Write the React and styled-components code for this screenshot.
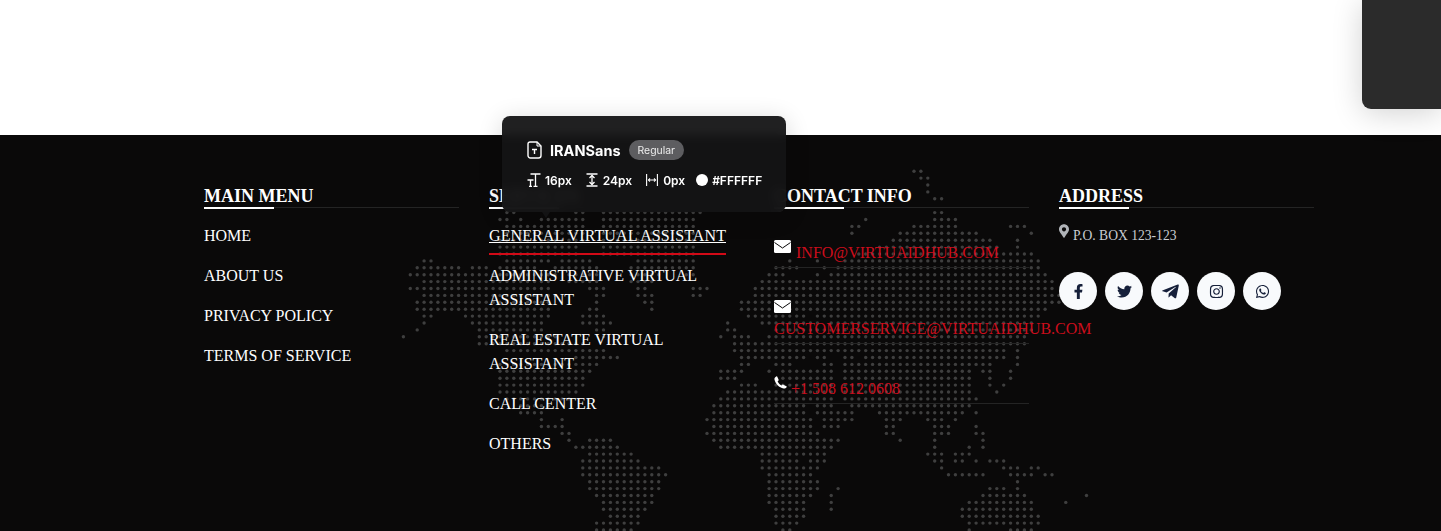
import React from 'react'
import styled, { createGlobalStyle } from 'styled-components'
import {
  FaMapMarkerAlt,
  FaFacebookF,
  FaTwitter,
  FaTelegramPlane,
  FaInstagram,
  FaWhatsapp,
} from 'react-icons/fa'

const GlobalStyle = createGlobalStyle`
  html, body {
    margin: 0;
    padding: 0;
    background: #fff;
    overflow: hidden;
  }
  * {
    box-sizing: border-box;
  }
`

const Page = styled.div`
  position: relative;
  width: 100%;
  height: 531px;
  overflow: hidden;
  font-family: 'Liberation Serif', 'Times New Roman', serif;
`

const TopArea = styled.div`
  height: 135px;
  background: #fff;
`

const Footer = styled.footer`
  position: relative;
  height: 396px;
  background: #0a0909;
  padding: 51px 0 0 204px;
`

const MapLayer = styled.svg`
  position: absolute;
  left: 0;
  top: 0;
  fill: #3f3f3f;
`

const Columns = styled.div`
  position: relative;
  display: grid;
  grid-template-columns: repeat(4, 255px);
  column-gap: 30px;
`

const Heading = styled.h3`
  position: relative;
  margin: 0 0 16px;
  height: 22px;
  font-size: 18px;
  line-height: 20px;
  font-weight: 700;
  color: #fff;
  text-transform: uppercase;
  border-bottom: 1px solid #242424;

  &::after {
    content: '';
    position: absolute;
    left: 0;
    bottom: -2px;
    width: 70px;
    height: 2px;
    background: #fff;
  }
`

const MenuList = styled.ul`
  list-style: none;
  margin: 0;
  padding: 0;
`

const MenuItem = styled.li`
  position: relative;
  margin-bottom: 16px;
  width: ${(p) => (p.$active ? 'fit-content' : 'auto')};
  font-size: 16px;
  line-height: 24px;
  letter-spacing: ${(p) => (p.$active ? '0.1px' : '0')};
  color: #fff;
  text-transform: uppercase;
  text-decoration: ${(p) => (p.$active ? 'underline' : 'none')};

  ${(p) =>
    p.$active &&
    `
    &::after {
      content: '';
      position: absolute;
      left: 0;
      right: 0;
      bottom: -7px;
      height: 2px;
      background: #d20a17;
    }
  `}
`

const ContactList = styled.ul`
  list-style: none;
  margin: 33px 0 0;
  padding: 0;
`

const ContactItem = styled.li`
  display: flex;
  flex-wrap: wrap;
  align-items: flex-start;
  column-gap: ${(p) => p.$gap || 5}px;
  padding-bottom: 2px;
  margin-bottom: 33px;
  border-bottom: 1px solid #242424;
`

const ContactIcon = styled.svg`
  display: block;
  margin: -1px 0 4px;
  fill: #fff;
`

const ContactLink = styled.a`
  font-size: 16px;
  line-height: 24px;
  color: #cc0d1c;
  text-transform: uppercase;
  white-space: nowrap;
`

const AddressLine = styled.p`
  display: flex;
  align-items: flex-start;
  gap: 4px;
  margin: 0 0 24px;
  height: 24px;
  font-size: 13.6px;
  line-height: 24px;
  color: #c9ccd1;
  text-transform: uppercase;

  svg {
    width: 10px;
    height: 14px;
    color: #b0b3b8;
  }
`

const SocialRow = styled.div`
  display: flex;
  gap: 8px;
`

const SocialButton = styled.a`
  display: flex;
  align-items: center;
  justify-content: center;
  width: 38px;
  height: 38px;
  border-radius: 50%;
  background: #f8fafc;
  color: #16203a;
  font-size: ${(p) => p.$size || 15}px;
`

const CornerPanel = styled.div`
  position: absolute;
  top: 0;
  right: 0;
  width: 79px;
  height: 109px;
  background: #2b2b2b;
  border-bottom-left-radius: 9px;
  box-shadow: 0 4px 30px rgba(0, 0, 0, 0.18);
`

const Inspector = styled.div`
  position: absolute;
  left: 502px;
  top: 116px;
  width: 284px;
  height: 96px;
  padding: 24px 24px 0 25px;
  border-radius: 8px;
  background: rgba(20, 20, 21, 0.95);
  backdrop-filter: blur(5px);
  box-shadow: 0 4px 24px rgba(0, 0, 0, 0.16);
  font-family: Inter, 'Noto Sans', sans-serif;
  color: #fff;

  &::after {
    content: '';
    position: absolute;
    left: 40px;
    bottom: -6px;
    width: 0;
    height: 0;
    border-left: 4px solid transparent;
    border-right: 4px solid transparent;
    border-top: 6px solid rgba(20, 20, 21, 0.95);
  }
`

const InspectorTitle = styled.div`
  display: flex;
  align-items: center;
  height: 20px;
`

const FontName = styled.span`
  margin: 0 8px 0 8px;
  font-size: 14.5px;
  font-weight: 700;
`

const WeightBadge = styled.span`
  display: flex;
  align-items: center;
  height: 20px;
  padding: 0 9px;
  border-radius: 10px;
  background: #5d5d60;
  color: #eeeeee;
  font-size: 10.4px;
`

const InspectorStats = styled.div`
  display: flex;
  align-items: center;
  height: 18px;
  margin-top: 11px;
`

const Stat = styled.span`
  display: flex;
  align-items: center;
  gap: ${(p) => p.$gap || 4}px;
  margin-right: ${(p) => p.$after || 0}px;
  font-size: 12px;
  font-weight: 600;
`

const Swatch = styled.i`
  display: block;
  width: 12px;
  height: 12px;
  border-radius: 50%;
  background: #fff;
`

// one entry per row, each row holds [first col, last col] runs of dots 6.9px apart
const mapRows = [
  [[74, 75]],
  [[75, 76]],
  [[76, 76]],
  [[76, 76]],
  [[77, 78]],
  [],
  [[15, 16], [25, 26], [29, 43], [77, 78]],
  [[14, 15], [17, 17], [20, 26], [29, 42], [67, 67], [77, 80]],
  [[15, 26], [29, 42], [65, 66], [74, 80], [88, 90]],
  [[15, 26], [29, 42], [65, 65], [72, 83], [91, 91]],
  [[14, 26], [29, 42], [71, 85], [89, 89]],
  [[14, 25], [29, 42], [69, 86], [89, 89]],
  [[14, 25], [29, 42], [66, 91]],
  [[3, 4], [15, 21], [23, 27], [34, 42], [56, 56], [60, 60], [64, 92]],
  [[2, 8], [10, 12], [14, 19], [22, 28], [33, 42], [54, 57], [61, 61], [63, 92]],
  [[1, 12], [13, 22], [24, 28], [33, 37], [41, 42], [53, 55], [60, 60], [62, 93]],
  [[3, 12], [13, 21], [24, 28], [33, 36], [52, 94]],
  [[1, 21], [27, 29], [34, 35], [42, 44], [51, 94]],
  [[3, 22], [28, 29], [34, 36], [42, 43], [51, 95]],
  [[2, 21], [28, 28], [35, 36], [49, 95]],
  [[2, 21], [27, 28], [36, 36], [49, 93]],
  [[3, 4], [9, 21], [26, 29], [50, 58], [60, 92]],
  [[3, 3], [10, 20], [26, 30], [47, 47], [52, 60], [62, 91]],
  [[2, 2], [11, 20], [28, 29], [47, 48], [54, 91]],
  [[0, 0], [11, 22], [29, 29], [46, 46], [48, 48], [49, 50], [53, 90]],
  [[11, 26], [48, 90]],
  [[15, 29], [48, 87], [89, 89]],
  [[25, 31], [49, 58], [60, 61], [64, 65], [67, 87], [89, 89]],
  [[14, 28], [49, 50], [54, 56], [61, 62], [64, 85], [89, 89]],
  [[14, 27], [46, 49], [53, 53], [55, 62], [64, 82], [84, 85], [88, 88]],
  [[14, 26], [46, 48], [55, 62], [64, 82], [85, 85], [88, 88]],
  [[14, 26], [49, 51], [54, 62], [64, 82], [85, 85], [87, 87]],
  [[14, 25], [47, 52], [53, 62], [64, 82], [86, 86]],
  [[15, 24], [46, 62], [64, 83]],
  [[17, 21], [45, 58], [60, 62], [65, 82]],
  [[17, 20], [45, 58], [60, 65], [69, 81], [83, 83]],
  [[20, 20], [23, 23], [44, 59], [61, 65], [70, 72], [76, 78], [80, 80]],
  [[20, 23], [45, 59], [61, 63], [70, 71], [77, 79], [83, 83]],
  [[23, 24], [44, 60], [70, 71], [77, 79], [83, 84]],
  [[24, 24], [27, 30], [45, 63], [72, 72], [77, 77], [84, 84]],
  [[25, 31], [46, 62], [77, 77], [82, 82], [84, 84]],
  [[27, 33], [52, 61], [76, 78], [80, 82]],
  [[26, 34], [52, 57], [59, 61], [77, 78], [80, 81], [83, 83], [85, 87]],
  [[26, 37], [52, 60], [78, 78], [87, 89], [91, 92]],
  [[26, 38], [53, 59], [79, 84], [88, 91], [93, 94]],
  [[27, 37], [53, 60], [89, 89]],
  [[27, 37], [53, 60], [63, 63], [85, 87], [89, 89]],
  [[28, 36], [53, 59], [62, 62], [84, 90], [99, 99]],
  [[29, 36], [53, 58], [62, 62], [82, 91], [96, 96]],
  [[29, 35], [54, 58], [62, 62], [81, 91]],
  [[30, 34], [54, 58], [81, 92]],
  [[28, 34], [54, 57], [82, 92]],
  [[28, 33], [55, 56], [82, 82], [88, 91]],
]

function DotMap() {
  const dots = []
  mapRows.forEach((spans, row) => {
    spans.forEach(([from, to]) => {
      for (let col = from; col <= to; col++) {
        dots.push(
          <circle
            key={`${row}-${col}`}
            cx={403.4 + col * 6.9}
            cy={36.2 + row * 6.9}
            r="1.7"
          />
        )
      }
    })
  })
  return (
    <MapLayer width="1441" height="396" viewBox="0 0 1441 396">
      {dots}
    </MapLayer>
  )
}

const MailIcon = () => (
  <ContactIcon width="17" height="13" viewBox="0 0 17 13">
    <rect width="17" height="13" rx="1.5" />
    <path d="M0.500 2.500L8.500 8L16.500 2.500" fill="none" stroke="#0a0909" strokeWidth="1" />
  </ContactIcon>
)

const PhoneIcon = () => (
  <ContactIcon width="13" height="13" viewBox="0 0 14 14">
    <path d="M3.400 0.600L5 4C5.200 4.500 5 4.900 4.500 5.200L3.900 5.600C4.600 7.600 6.200 9.300 8.200 10.200L8.800 9.600C9.200 9.200 9.600 9.100 10 9.300L13.400 11C13.800 11.200 13.900 11.600 13.600 12C12.800 13.100 11.600 13.800 10.300 13.500C5.600 12.600 1.400 8.300 0.500 3.800C0.200 2.400 1.200 1.100 2.500 0.500C2.900 0.300 3.200 0.300 3.400 0.600Z" />
  </ContactIcon>
)

const FileIcon = () => (
  <svg width="15" height="18" viewBox="0 0 15 18" fill="none" stroke="#fff" strokeWidth="1.4">
    <path d="M3 1h7l4 4v9.500a2.500 2.500 0 0 1-2.500 2.500h-8A2.500 2.500 0 0 1 1 14.500V3a2 2 0 0 1 2-2z" />
    <path d="M10 1v4h4" strokeWidth="1" />
    <path d="M5 8.500h5M7.500 8.500V13" />
  </svg>
)

const SizeIcon = () => (
  <svg width="14" height="14" viewBox="0 0 14 14" fill="none" stroke="#fff" strokeWidth="1.3">
    <path d="M3.500 1h10M8.500 1v12.500M6.500 13.500h4" />
    <path d="M0.500 7h6M3.500 7v6.500M2 13.500h3" />
  </svg>
)

const LineHeightIcon = () => (
  <svg width="12" height="14" viewBox="0 0 12 14" fill="none" stroke="#fff" strokeWidth="1.3">
    <path d="M0.500 1h11M0.500 13h11M6 2.500v9" />
    <path d="M3.500 5L6 2.500 8.500 5M3.500 9L6 11.500 8.500 9" />
  </svg>
)

const SpacingIcon = () => (
  <svg width="12" height="14" viewBox="0 0 12 14" fill="none" stroke="#fff" strokeWidth="1.1">
    <path d="M0.600 1v12M11.400 1v12M2.500 7h7" />
    <path d="M4 5.500L2.500 7 4 8.500M8 5.500L9.500 7 8 8.500" />
  </svg>
)

export default function App() {
  return (
    <Page>
      <GlobalStyle />
      <TopArea />
      <Footer>
        <DotMap />
        <Columns>
          <div>
            <Heading>Main Menu</Heading>
            <MenuList>
              <MenuItem>Home</MenuItem>
              <MenuItem>About Us</MenuItem>
              <MenuItem>Privacy Policy</MenuItem>
              <MenuItem>Terms of Service</MenuItem>
            </MenuList>
          </div>
          <div>
            <Heading>Services</Heading>
            <MenuList>
              <MenuItem $active>General Virtual Assistant</MenuItem>
              <MenuItem>Administrative Virtual Assistant</MenuItem>
              <MenuItem>Real Estate Virtual Assistant</MenuItem>
              <MenuItem>Call Center</MenuItem>
              <MenuItem>Others</MenuItem>
            </MenuList>
          </div>
          <div>
            <Heading>Contact Info</Heading>
            <ContactList>
              <ContactItem>
                <MailIcon />
                <ContactLink>info@virtuaidhub.com</ContactLink>
              </ContactItem>
              <ContactItem>
                <MailIcon />
                <ContactLink>customerservice@virtuaidhub.com</ContactLink>
              </ContactItem>
              <ContactItem $gap={4}>
                <PhoneIcon />
                <ContactLink>+1 508 612 0608</ContactLink>
              </ContactItem>
            </ContactList>
          </div>
          <div>
            <Heading>Address</Heading>
            <AddressLine>
              <FaMapMarkerAlt />
              P.O. Box 123-123
            </AddressLine>
            <SocialRow>
              <SocialButton><FaFacebookF /></SocialButton>
              <SocialButton><FaTwitter /></SocialButton>
              <SocialButton $size={19}><FaTelegramPlane /></SocialButton>
              <SocialButton><FaInstagram /></SocialButton>
              <SocialButton><FaWhatsapp /></SocialButton>
            </SocialRow>
          </div>
        </Columns>
      </Footer>
      <CornerPanel />
      <Inspector>
        <InspectorTitle>
          <FileIcon />
          <FontName>IRANSans</FontName>
          <WeightBadge>Regular</WeightBadge>
        </InspectorTitle>
        <InspectorStats>
          <Stat $after={14}><SizeIcon />16px</Stat>
          <Stat $after={14} $gap={5}><LineHeightIcon />24px</Stat>
          <Stat $after={11} $gap={5}><SpacingIcon />0px</Stat>
          <Stat><Swatch />#FFFFFF</Stat>
        </InspectorStats>
      </Inspector>
    </Page>
  )
}
